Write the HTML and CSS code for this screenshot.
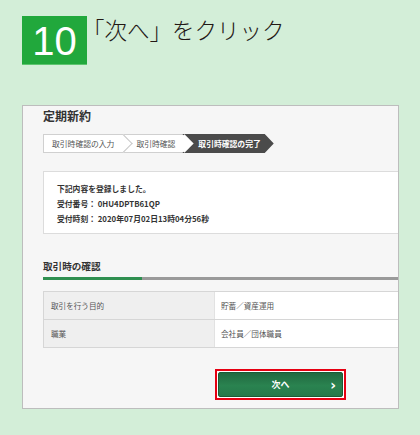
FILE: index.html
```html
<!DOCTYPE html>
<html lang="ja">
<head>
<meta charset="utf-8">
<title>次へをクリック</title>
<link rel="stylesheet" href="styles.css">
</head>
<body>
<div class="header">
  <div class="badge">10</div>
  <div class="title">「次へ」をクリック</div>
</div>
<div class="panel">
  <div class="inner">
    <div class="page-title">定期新約</div>
    <div class="steps">
      <div class="step step-1">取引時確認の入力</div>
      <div class="step step-2">取引時確認</div>
      <div class="step step-3">取引時確認の完了</div>
    </div>
    <div class="info">
      <div class="info-line">下記内容を登録しました。</div>
      <div class="info-line">受付番号： 0HU4DPTB61QP</div>
      <div class="info-line">受付時刻： 2020年07月02日13時04分56秒</div>
    </div>
    <div class="section-title">取引時の確認</div>
    <div class="section-rule"><div class="rule-accent"></div></div>
    <div class="table">
      <div class="row">
        <div class="cell-head">取引を行う目的</div>
        <div class="cell-body">貯蓄／資産運用</div>
      </div>
      <div class="row">
        <div class="cell-head">職業</div>
        <div class="cell-body">会社員／団体職員</div>
      </div>
    </div>
    <div class="action">
      <div class="highlight">
        <div class="next-btn"><span class="next-label">次へ</span><span class="next-arrow">›</span></div>
      </div>
    </div>
  </div>
</div>
</body>
</html>
```

FILE: styles.css
```css
html, body {
  margin: 0;
  padding: 0;
}
body {
  background: #d3eed8;
  width: 420px;
  height: 435px;
  overflow: hidden;
  font-family: "Noto Sans CJK JP", "Noto Sans", sans-serif;
}
.header {
  display: flex;
  align-items: flex-start;
  padding: 16px 0 0 22px;
}
.badge {
  width: 65px;
  height: 49px;
  background: #21a83c;
  border-bottom: 1px solid #5cc46e;
  box-sizing: border-box;
  color: #fff;
  font-family: "Liberation Sans", Arial, sans-serif;
  font-size: 40px;
  line-height: 51px;
  text-align: center;
}
.title {
  font-family: "Noto Sans CJK JP", sans-serif;
  font-weight: 300;
  font-size: 22.5px;
  line-height: 26px;
  color: #231815;
  margin-left: -5px;
}
.panel {
  margin: 40px 0 0 22px;
  width: 377px;
  height: 304px;
  box-sizing: border-box;
  border: 1px solid #bdbdbd;
  background: #f6f6f6;
  overflow: hidden;
}
.inner {
  width: 400px;
  padding-left: 20px;
}
.page-title {
  font-size: 12px;
  font-weight: bold;
  color: #333;
  line-height: 20px;
}
.steps {
  display: flex;
  margin-top: 8px;
  height: 19px;
}
.step {
  position: relative;
  height: 19px;
  box-sizing: border-box;
  font-size: 7.8px;
  line-height: 17px;
  color: #555;
  white-space: nowrap;
}
.step-1 {
  background: #fff;
  border: 1px solid #d0d0d0;
  border-right: none;
  padding: 0 14px 0 8px;
}
.step-2 {
  background: #fff;
  border-top: 1px solid #d0d0d0;
  border-bottom: 1px solid #d0d0d0;
  padding: 0 14px 0 8px;
}
.step-1::after, .step-2::after {
  content: "";
  position: absolute;
  right: -2px;
  top: 2px;
  width: 12px;
  height: 12px;
  transform: rotate(45deg);
  border-top: 1px solid #c8c8c8;
  border-right: 1px solid #c8c8c8;
  background: #fff;
  z-index: 1;
}
.step-2::after {
  border-color: transparent;
}
.step-3 {
  background: #4b4b4b;
  color: #fff;
  font-weight: bold;
  margin-left: -7px;
  padding: 0 13px 0 16px;
  line-height: 19px;
  clip-path: polygon(0 0, calc(100% - 9px) 0, 100% 50%, calc(100% - 9px) 100%, 0 100%, 9px 50%);
}
.info {
  margin-top: 18px;
  background: #fff;
  border: 1px solid #dcdcdc;
  padding: 9px 0 7px 13px;
  font-size: 7.8px;
  font-weight: bold;
  color: #333;
}
.info-line {
  line-height: 15px;
}
.section-title {
  margin-top: 24px;
  font-size: 9.6px;
  font-weight: bold;
  color: #333;
  line-height: 16px;
}
.section-rule {
  margin-top: 3px;
  height: 3px;
  background: #9a9a9a;
}
.rule-accent {
  width: 99px;
  height: 3px;
  background: #2f8f50;
}
.table {
  margin-top: 11px;
  border-top: 1px solid #d6d6d6;
}
.row {
  display: flex;
  height: 27px;
  border-bottom: 1px solid #d6d6d6;
  border-left: 1px solid #d6d6d6;
  font-size: 7.6px;
  color: #555;
}
.cell-head {
  width: 163px;
  background: #efefef;
  border-right: 1px solid #e2e2e2;
  padding-left: 7px;
  line-height: 27px;
}
.cell-body {
  flex: 1;
  background: #fff;
  padding-left: 6px;
  line-height: 27px;
}
.action {
  padding: 21px 0 0 172px;
}
.highlight {
  width: 131px;
  height: 31px;
  box-sizing: border-box;
  border: 2px solid #e60012;
  padding: 1px;
  background: #fff;
}
.next-btn {
  position: relative;
  height: 100%;
  box-sizing: border-box;
  border: 1px solid #1c5a35;
  border-radius: 2px;
  background: linear-gradient(#226940, #2a8350 55%, #26784a);
  color: #fff;
  display: flex;
  align-items: center;
  justify-content: center;
}
.next-label {
  font-size: 9px;
  font-weight: bold;
  line-height: 12px;
}
.next-arrow {
  position: absolute;
  right: 6px;
  top: 3px;
  font-family: "DejaVu Sans", sans-serif;
  font-size: 14px;
  font-weight: bold;
  line-height: 18px;
}
```
